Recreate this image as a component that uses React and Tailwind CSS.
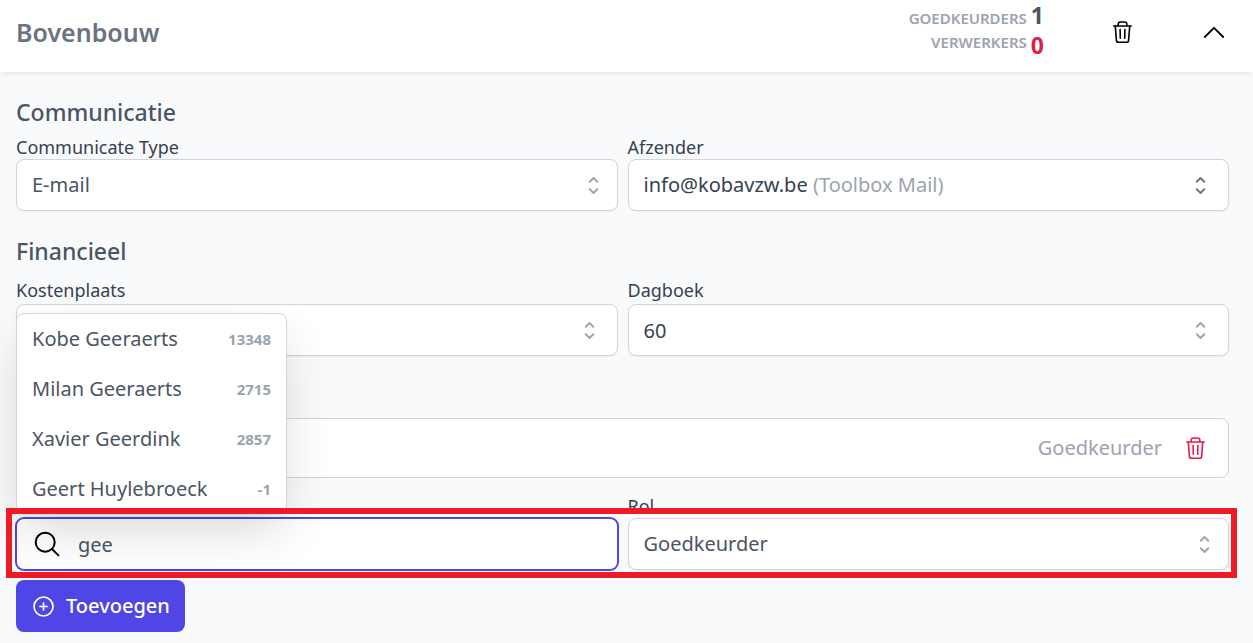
import { useState } from "react";

const people = [
  { name: "Kobe Geeraerts", code: "13348" },
  { name: "Milan Geeraerts", code: "2715" },
  { name: "Xavier Geerdink", code: "2857" },
  { name: "Geert Huylebroeck", code: "-1" },
];

const box =
  "block h-[52px] w-full rounded-lg border border-[#d1d5db] bg-white pl-[15px] pr-12 text-left text-xl shadow-xs";

function TrashIcon() {
  return (
    <svg className="size-6" viewBox="0 0 24 24" fill="none" stroke="currentColor" strokeWidth="1.6" strokeLinecap="round" strokeLinejoin="round" aria-hidden="true">
      <path d="M2.8 6h17.4" />
      <path d="M7.2 5.6V4.1c0-1.2.9-2.1 2.1-2.1h4.4c1.2 0 2.1.9 2.1 2.1v1.5" />
      <path d="M4.3 6.2l1.1 14.2c.1 1.2.9 1.9 2 1.9h8.2c1.1 0 1.9-.7 2-1.9l1.1-14.2" />
      <path d="M9.1 9.5l.2 8.8M13.9 9.5l-.2 8.8" />
    </svg>
  );
}

function SelectorIcon() {
  return (
    <svg className="size-[25px]" viewBox="0 0 20 20" fill="none" stroke="currentColor" strokeWidth="1.5" strokeLinecap="round" strokeLinejoin="round" aria-hidden="true">
      <path d="M7 7l3-3 3 3m0 6l-3 3-3-3" />
    </svg>
  );
}

function Label({ htmlFor, children }) {
  return (
    <label htmlFor={htmlFor} className="block text-lg leading-6 text-[#374151]">
      {children}
    </label>
  );
}

function NativeSelect({ id, options }) {
  return (
    <div className="relative">
      <select id={id} className={`${box} appearance-none text-[#4b5563]`}>
        {options.map((o) => (
          <option key={o}>{o}</option>
        ))}
      </select>
      <span className="pointer-events-none absolute inset-y-0 right-3 flex items-center text-[#9ca3af]">
        <SelectorIcon />
      </span>
    </div>
  );
}

function Combobox({ id, initial }) {
  const [value, setValue] = useState(initial);
  return (
    <div className="relative">
      <input id={id} role="combobox" aria-expanded="false" value={value} onChange={(e) => setValue(e.target.value)} className={`${box} text-[#374151]`} />
      <button type="button" aria-label="Opties" className="absolute inset-y-0 right-4 flex items-center text-[#9ca3af]">
        <SelectorIcon />
      </button>
    </div>
  );
}

export default function App() {
  const [query, setQuery] = useState("gee");
  return (
    <div className="min-h-screen bg-[#f9fafc] font-['Noto_Sans',sans-serif] text-[#374151]">
      <header className="flex h-[72px] items-center gap-[67px] bg-white pr-[27px] pb-2 pl-4 shadow-md shadow-black/5">
        <h1 className="flex-1 text-[25px] leading-8 font-semibold text-[#6b7280]">Bovenbouw</h1>
        <div className="flex items-center gap-1 pb-1 text-right">
          <div className="text-[15px] leading-6 font-semibold text-[#9ca3af]">
            <p>GOEDKEURDERS</p>
            <p>VERWERKERS</p>
          </div>
          <div className="text-[23px] leading-[30px] font-bold">
            <p className="text-[#4b5563]">1</p>
            <p className="text-[#e11d48]">0</p>
          </div>
        </div>
        <button type="button" aria-label="Verwijderen" className="text-black">
          <TrashIcon />
        </button>
        <button type="button" aria-label="Inklappen" className="text-black">
          <svg className="size-6" viewBox="0 0 24 24" fill="none" stroke="currentColor" strokeWidth="1.8" strokeLinecap="round" strokeLinejoin="round" aria-hidden="true">
            <path d="M2.8 17L12 7.8l9.2 9.2" />
          </svg>
        </button>
      </header>

      <main className="pt-6 pr-6 pb-[11px] pl-4">
        <section>
          <h2 className="mb-[7px] text-[23px] leading-8 font-medium text-[#4b5563]">Communicatie</h2>
          <div className="grid grid-cols-2 gap-x-2.5">
            <div>
              <Label htmlFor="type">Communicate Type</Label>
              <NativeSelect id="type" options={["E-mail"]} />
            </div>
            <div>
              <Label htmlFor="sender">Afzender</Label>
              <div className="relative">
                <button id="sender" type="button" aria-haspopup="listbox" className={`${box} text-[#374151]`}>
                  info@kobavzw.be <span className="text-[#9ca3af]">(Toolbox Mail)</span>
                </button>
                <span className="pointer-events-none absolute inset-y-0 right-4 flex items-center text-[#6b7280]">
                  <SelectorIcon />
                </span>
              </div>
            </div>
          </div>
        </section>

        <section className="mt-6">
          <h2 className="mb-[11px] text-[23px] leading-8 font-medium text-[#4b5563]">Financieel</h2>
          <div className="grid grid-cols-2 gap-x-2.5">
            <div className="flex flex-col gap-0.5">
              <Label htmlFor="cost">Kostenplaats</Label>
              <Combobox id="cost" initial="" />
            </div>
            <div className="flex flex-col gap-0.5">
              <Label htmlFor="journal">Dagboek</Label>
              <Combobox id="journal" initial="60" />
            </div>
          </div>
        </section>

        <section className="mt-[62px]">
          <ul>
            <li className="flex h-[60px] items-center justify-end gap-[22px] rounded-lg border border-[#d1d5db] bg-white pr-5 text-xl text-[#9ca3af]">
              <span>Goedkeurder</span>
              <button type="button" aria-label="Goedkeurder verwijderen" className="text-[#e11d48]">
                <TrashIcon />
              </button>
            </li>
          </ul>
          <div className="relative mt-4 grid grid-cols-2 items-end gap-x-2.5">
            <div className="relative">
              <input
                type="text"
                role="combobox"
                aria-expanded="true"
                aria-controls="people"
                aria-label="Zoeken"
                value={query}
                onChange={(e) => setQuery(e.target.value)}
                className="block h-[52px] w-full rounded-lg border border-[#4f46e5] bg-white pr-4 pl-[61px] text-xl text-[#4b5563] ring-1 ring-[#4f46e5] outline-none"
              />
              <span className="pointer-events-none absolute inset-y-0 left-4 z-10 flex items-center text-black">
                <svg className="size-[30px]" viewBox="0 0 30 30" fill="none" stroke="currentColor" strokeWidth="2" strokeLinecap="round" aria-hidden="true">
                  <circle cx="13.2" cy="13.2" r="9.5" />
                  <path d="M20 20l6.4 6.4" />
                </svg>
              </span>
              <ul id="people" role="listbox" className="absolute bottom-full left-0 mb-[3px] w-[271px] rounded-lg border border-[#d1d5db] bg-white text-[#4b5563] shadow-[0_20px_50px_-6px_rgba(0,0,0,0.16)]">
                {people.map((p) => (
                  <li key={p.name} role="option" aria-selected="false" className="flex h-[50px] items-center justify-between px-[15px] text-xl">
                    <span>{p.name}</span>
                    <span className="text-[15px] font-bold text-[#9ca3af]">{p.code}</span>
                  </li>
                ))}
              </ul>
            </div>
            <div>
              <Label htmlFor="role">Rol</Label>
              <NativeSelect id="role" options={["Goedkeurder", "Verwerker"]} />
            </div>
            <div className="pointer-events-none absolute top-3.5 -right-2 -bottom-2 -left-2.5 z-20 border-6 border-[#ed1c24]" />
          </div>
          <button type="button" className="mt-2.5 flex h-[52px] items-center gap-2.5 rounded-lg bg-[#4f46e5] px-[15px] text-xl font-medium text-white">
            <svg className="size-[25px]" viewBox="0 0 25 25" fill="none" stroke="currentColor" strokeWidth="1.7" strokeLinecap="round" aria-hidden="true">
              <circle cx="12.5" cy="12.5" r="9.5" />
              <path d="M12.5 9v7M9 12.5h7" />
            </svg>
            Toevoegen
          </button>
        </section>
      </main>
    </div>
  );
}
